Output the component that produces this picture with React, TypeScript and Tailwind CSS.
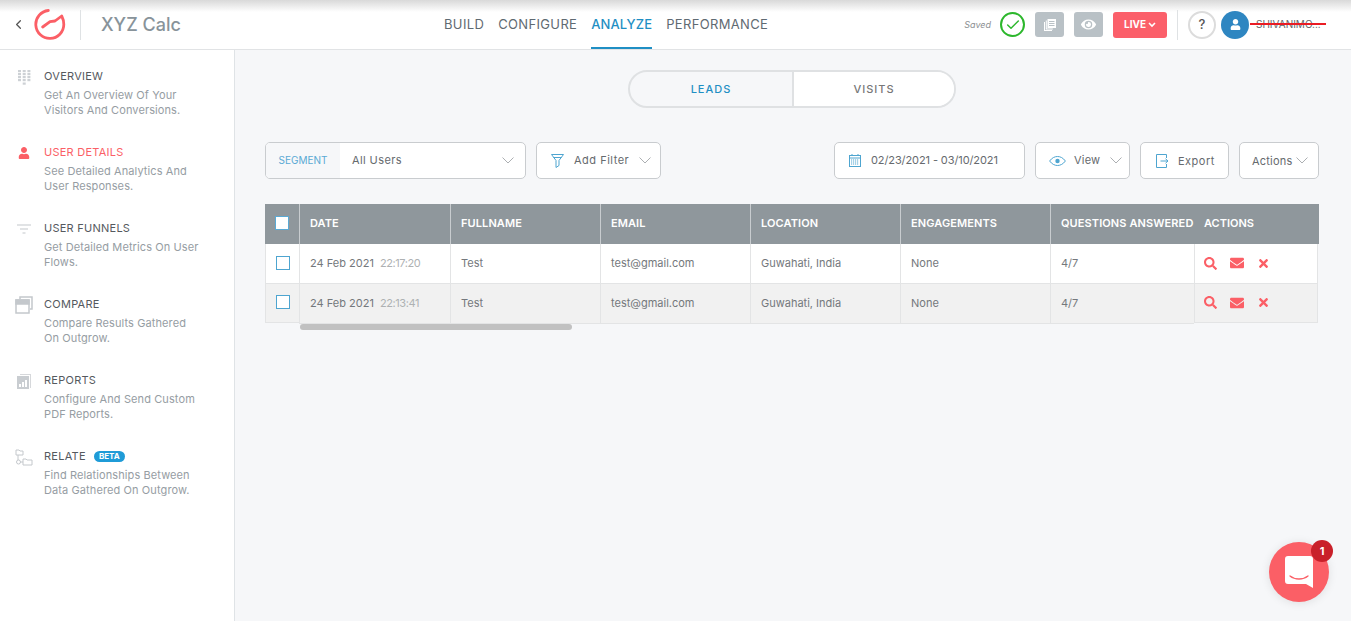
import { ChevronLeft, Check } from "lucide-react";
import { FaEnvelope, FaEye, FaSearch, FaTimes, FaUser } from "react-icons/fa";
import type { ReactNode } from "react";

const font = "font-['Inter','Open_Sans',sans-serif]";

const GridIcon = () => (
  <svg width="13" height="15" viewBox="0 0 13 15" fill="#cdd1d5">
    {[0, 1, 2, 3].map((r) =>
      [0, 1, 2].map((c) => <rect key={`${r}${c}`} x={c * 4.7} y={r * 3} width="3" height="2.2" />)
    )}
    <rect x="4.700" y="12.500" width="3" height="2.200" />
  </svg>
);

const FunnelLines = () => (
  <svg width="14" height="10" viewBox="0 0 14 10" stroke="#c4c8cc" strokeWidth="1.2">
    <path d="M0 1h14M3 5h8M5.500 9h3" />
  </svg>
);

const CompareIcon = () => (
  <svg width="18" height="18" viewBox="0 0 18 18" fill="none" stroke="#c4c8cc" strokeWidth="1.500">
    <path d="M5 3V1h12v12h-2" />
    <rect x="1" y="4" width="13" height="13" fill="#fff" />
    <rect x="1" y="4" width="13" height="4" fill="#c4c8cc" />
  </svg>
);

const ReportIcon = () => (
  <svg width="14" height="15" viewBox="0 0 14 15">
    <path d="M3 0h11v14h-1V1H3z" fill="#d6d8db" />
    <rect x="0" y="2" width="12" height="13" fill="#c9cdd1" />
    <path d="M2 13v-3h2v3zM5 13V8h2v5zM8 13V6h2v7z" fill="#fff" />
  </svg>
);

const RelateIcon = () => (
  <svg width="18" height="17" viewBox="0 0 18 17" fill="none" stroke="#c4c8cc" strokeWidth="1">
    <path d="M1 1h3l1 1h3v4H1zM3 6v5" />
    <circle cx="3.500" cy="13" r="2" fill="#fff" />
    <path d="M8 10h3l1 1h5v5H8z" />
    <path d="M5.500 13H8" />
  </svg>
);

const LogoIcon = () => (
  <svg width="32" height="32" viewBox="0 0 32 32" fill="none" stroke="#fb5f66" strokeWidth="2.800" strokeLinecap="round" strokeLinejoin="round">
    <path d="M14.300 1.500A14 14 0 1 0 29.800 15.500C29.800 12 29 9.500 27.700 7L21 12L16 12.700L8.700 18" />
  </svg>
);

const PagesIcon = () => (
  <svg width="14" height="14" viewBox="0 0 14 14" fill="#fff">
    <path d="M1 4h1v8h7v1H1z" />
    <path d="M2.800 2.500h1v8h6v1h-7z" />
    <path d="M4.500 1H13v9H4.500zM6 3v1h5.500V3zM6 5v1h5.500V5zM6 7v1h5.500V7z" fillRule="evenodd" />
  </svg>
);

const Chevron = ({ className = "" }: { className?: string }) => (
  <svg width="12" height="7" viewBox="0 0 12 7" fill="none" stroke="#a3a6a9" strokeWidth="0.900" className={className}>
    <path d="M.5 .5L6 6l5.500-5.500" />
  </svg>
);

const FilterIcon = () => (
  <svg width="13" height="14" viewBox="0 0 13 14" fill="none" stroke="#4ea5d0" strokeWidth="1">
    <path d="M.5 .5h12M.5 .5L5 6.500v7l3-2v-5L12.500 .5M2.500 3.500h8" />
  </svg>
);

const CalendarIcon = () => (
  <svg width="12" height="13" viewBox="0 0 12 13" fill="none" stroke="#4ea5d0" strokeWidth="1">
    <rect x=".5" y="1.500" width="11" height="11" />
    <path d="M.5 4h11M3 0v2M9 0v2" />
    <path d="M2 6h8M2 8h8M2 10h8" strokeDasharray="1.200 .8" />
  </svg>
);

const EyeIcon = () => (
  <svg width="17" height="10" viewBox="0 0 17 10" fill="none" stroke="#4ea5d0" strokeWidth="1">
    <path d="M.6 5C3 1.800 5.700 .5 8.500 .5S14 1.800 16.400 5C14 8.200 11.300 9.500 8.500 9.500S3 8.200 .6 5z" />
    <circle cx="8.500" cy="5" r="2.200" fill="#4ea5d0" stroke="none" />
  </svg>
);

const ExportIcon = () => (
  <svg width="12" height="14" viewBox="0 0 12 14" fill="none" stroke="#4ea5d0" strokeWidth="1">
    <path d="M10.500 4V.5H.5v13h10V10" />
    <path d="M4.500 7H12M9.500 4.800L12 7 9.500 9.200" />
  </svg>
);

function NavItem({
  icon,
  title,
  lines,
  active,
  badge,
}: {
  icon: ReactNode;
  title: string;
  lines: string[];
  active?: boolean;
  badge?: boolean;
}) {
  return (
    <div className="flex h-[76px]">
      <div className="flex h-[18px] w-[44px] shrink-0 items-center justify-center pl-[4px]">
        <div className="flex w-[18px] justify-center">{icon}</div>
      </div>
      <div>
        <div className={`flex h-[16px] items-center text-[11px] leading-[16px] tracking-[0.25px] ${active ? "text-[#fb5f66]" : "text-[#55595e]"}`}>
          {title}
          {badge && (
            <span className="ml-[8px] flex h-[11px] w-[31px] items-center justify-center rounded-full bg-[#1f9bd7] text-[8px] font-bold tracking-normal text-white">
              BETA
            </span>
          )}
        </div>
        <div className="mt-[4px] text-[11px] leading-[15px] tracking-[0.1px] text-[#969da3]">
          {lines.map((l) => (
            <div key={l}>{l}</div>
          ))}
        </div>
      </div>
    </div>
  );
}

const columns = ["DATE", "FULLNAME", "EMAIL", "LOCATION", "ENGAGEMENTS", "QUESTIONS ANSWERED"];

const rows = [
  { time: "22:17:20", bg: "bg-white" },
  { time: "22:13:41", bg: "bg-[#f1f1f1]" },
];

function Box({ className, children }: { className: string; children: ReactNode }) {
  return <div className={`flex h-[37px] items-center rounded-[5px] border border-[#c9cccf] bg-white ${className}`}>{children}</div>;
}

function Table() {
  return (
    <div className="mt-[25px] flex w-[1054px] text-[11px]">
      {/* pinned checkbox column */}
      <div className="w-[34px] shrink-0">
        <div className="flex h-[40px] items-center justify-center bg-[#8f979c] pb-[3px]">
          <div className="h-[14px] w-[14px] border border-[#5aa9d4] bg-white" />
        </div>
        {rows.map((r, i) => (
          <div
            key={r.time}
            className={`flex items-center justify-center border-l border-b border-[#e3e4e5] ${r.bg} ${i === 1 ? "h-[39px] pb-[2px]" : "h-[40px] pb-[1px]"}`}
          >
            <div className="h-[14px] w-[14px] border border-[#4ea5d0] bg-white" />
          </div>
        ))}
      </div>

      {/* scrolling columns */}
      <div className="w-[895px] shrink-0">
        <div className="flex h-[40px] bg-[#8f979c]">
          {columns.map((c, i) => (
            <div
              key={c}
              className={`flex h-full shrink-0 items-center overflow-hidden border-l border-[#c8cccf] pb-[2px] pl-[10px] font-semibold tracking-[0.1px] whitespace-nowrap text-white ${i === 5 ? "w-[144px]" : i === 0 ? "w-[151px]" : "w-[150px]"}`}
            >
              {c}
            </div>
          ))}
        </div>
        {rows.map((r, ri) => (
          <div key={r.time} className={`flex h-[40px] border-b border-[#e3e4e5] text-[#74787c] ${r.bg}`}>
            {[
              <>
                24 Feb 2021<span className="ml-[6px] tracking-[-0.4px] text-[#aeb1b3]">{r.time}</span>
              </>,
              "Test",
              "test@gmail.com",
              "Guwahati, India",
              "None",
              "4/7",
            ].map((v, i) => (
              <div
                key={i}
                className={`flex shrink-0 items-center border-l border-[#e3e4e5] pl-[10px] whitespace-nowrap ${i === 5 ? "w-[144px]" : i === 0 ? "w-[151px]" : "w-[150px]"} ${ri === 0 ? "pb-[1px]" : ""}`}
              >
                {v}
              </div>
            ))}
          </div>
        ))}
        <div className="ml-[1px] h-[6px] w-[272px] rounded-full bg-[#c1c1c1]" />
      </div>

      {/* pinned actions column */}
      <div className="w-[125px] shrink-0">
        <div className="flex h-[40px] items-center bg-[#8f979c] pb-[2px] pl-[10px] font-semibold text-white">ACTIONS</div>
        {rows.map((r, i) => (
          <div
            key={r.time}
            className={`mr-[1px] flex items-center border-l border-b border-r border-[#e3e4e5] pb-[1px] pl-[9px] ${i === 0 ? "h-[40px]" : "h-[39px]"} ${r.bg}`}
          >
            <FaSearch size={13} color="#fb5f66" />
            <FaEnvelope size={14} color="#fb5f66" className="ml-[13px]" />
            <FaTimes size={13} color="#fb5f66" className="ml-[13px]" />
          </div>
        ))}
      </div>
    </div>
  );
}

export default function App() {
  return (
    <div className={`flex h-[621px] w-[1351px] flex-col overflow-hidden bg-[#f6f7f9] ${font}`}>
      {/* top bar */}
      <header className="relative flex h-[50px] shrink-0 items-center border-b border-[#e1e3e5] bg-white">
        <div className="absolute inset-x-0 top-0 h-[12px] bg-gradient-to-b from-[#d9d9d9] to-white" />
        <div className="relative flex w-[430px] items-center pl-[11px]">
          <ChevronLeft size={15} strokeWidth={2} color="#555" />
          <div className="ml-[8px] flex"><LogoIcon /></div>
          <div className="ml-[14px] h-[30px] w-px bg-[#dfe2e4]" />
          <span className="ml-[20px] text-[18px] font-medium text-[#88939a]">XYZ Calc</span>
        </div>
        <nav className="relative flex h-full items-center gap-[14px] pl-[14px] text-[13px] tracking-[0.35px] text-[#5f6a72]">
          <span>BUILD</span>
          <span>CONFIGURE</span>
          <span className="flex h-full items-center border-b-2 border-[#1f8fc4] pt-[2px] font-medium tracking-[0.1px] text-[#1f8fc4]">ANALYZE</span>
          <span>PERFORMANCE</span>
        </nav>
        <div className="relative ml-auto flex items-center pr-[23px]">
          <span className="mr-[9px] text-[9px] text-[#8c8f92] italic">Saved</span>
          <div className="flex h-[25px] w-[25px] items-center justify-center rounded-full border-2 border-[#2cb72c]">
            <Check size={16} strokeWidth={2.200} color="#2cb72c" />
          </div>
          <div className="ml-[10px] flex h-[25px] w-[29px] items-center justify-center rounded-[3px] bg-[#b9c1c6]">
            <PagesIcon />
          </div>
          <div className="ml-[10px] flex h-[25px] w-[29px] items-center justify-center rounded-[3px] bg-[#b9c1c6]">
            <FaEye size={15} color="#fff" />
          </div>
          <div className="ml-[10px] flex h-[26px] w-[54px] items-center justify-center rounded-[3px] bg-[#fb5f6a] text-[10px] font-bold text-white">
            LIVE
            <svg width="8" height="6" viewBox="0 0 8 6" fill="none" stroke="#fff" strokeWidth="1.600" className="ml-[2px]">
              <path d="M1 1l3 3 3-3" />
            </svg>
          </div>
          <div className="ml-[10px] h-[30px] w-px bg-[#dfe2e4]" />
          <div className="ml-[10px] flex h-[28px] w-[28px] items-center justify-center rounded-full border-2 border-[#dcdcdc] text-[13px] font-medium text-[#555]">?</div>
          <div className="ml-[5px] flex h-[28px] w-[28px] items-center justify-center rounded-full bg-[#2e86c1]">
            <FaUser size={11} color="#fff" />
          </div>
          <div className="relative ml-[7px] w-[72px] text-[10px] whitespace-nowrap text-[#666]">
            SHIVANIMO...
            <div className="absolute top-[6px] -left-[6px] h-[2px] w-[76px] bg-[#ea1c24]" />
          </div>
        </div>
      </header>

      <div className="flex min-h-0 flex-1">
        {/* sidebar */}
        <aside className="w-[235px] shrink-0 border-r border-[#dfe3e6] bg-white pt-[18px]">
          <NavItem icon={<GridIcon />} title="OVERVIEW" lines={["Get An Overview Of Your", "Visitors And Conversions."]} />
          <NavItem active icon={<FaUser size={12} color="#fb5f66" />} title="USER DETAILS" lines={["See Detailed Analytics And", "User Responses."]} />
          <NavItem icon={<FunnelLines />} title="USER FUNNELS" lines={["Get Detailed Metrics On User", "Flows."]} />
          <NavItem icon={<CompareIcon />} title="COMPARE" lines={["Compare Results Gathered", "On Outgrow."]} />
          <NavItem icon={<ReportIcon />} title="REPORTS" lines={["Configure And Send Custom", "PDF Reports."]} />
          <NavItem badge icon={<RelateIcon />} title="RELATE" lines={["Find Relationships Between", "Data Gathered On Outgrow."]} />
        </aside>

        {/* main */}
        <main className="relative flex-1 pl-[30px]">
          <div className="mt-[20px] ml-[363px] flex h-[38px] w-[328px] overflow-hidden rounded-full border-2 border-[#dfe1e3] text-[11px] tracking-[1px]">
            <div className="flex w-[164px] items-center justify-center border-r-2 border-[#dfe1e3] font-medium text-[#1f8fc4]">LEADS</div>
            <div className="flex flex-1 items-center justify-center bg-white font-medium text-[#777]">VISITS</div>
          </div>

          <div className="mt-[34px] flex w-[1054px] items-center text-[11px] text-[#666a6e]">
            <Box className="w-[261px] overflow-hidden">
              <div className="flex h-full w-[74px] items-center justify-center bg-[#f6f7f9] text-[10px] text-[#5aa9d4]">SEGMENT</div>
              <span className="ml-[12px] tracking-[0.4px]">All Users</span>
              <Chevron className="mr-[11px] ml-auto" />
            </Box>
            <Box className="ml-[10px] w-[125px] pl-[14px]">
              <FilterIcon />
              <span className="ml-[10px] tracking-[0.5px]">Add Filter</span>
              <Chevron className="mr-[9px] ml-auto" />
            </Box>
            <Box className="ml-auto w-[191px] pl-[14px]">
              <CalendarIcon />
              <span className="ml-[10px] tracking-[-0.1px] whitespace-nowrap">02/23/2021 - 03/10/2021</span>
            </Box>
            <Box className="ml-[10px] w-[95px] pl-[13px]">
              <EyeIcon />
              <span className="ml-[8px] tracking-[0.2px]">View</span>
              <Chevron className="mr-[7px] ml-auto" />
            </Box>
            <Box className="ml-[10px] w-[89px] pl-[15px]">
              <ExportIcon />
              <span className="ml-[10px] pt-[2px] tracking-[0.5px]">Export</span>
            </Box>
            <Box className="ml-[10px] w-[80px] pl-[12px]">
              <span className="pt-[2px] tracking-[0.2px]">Actions</span>
              <Chevron className="ml-[4px]" />
            </Box>
          </div>

          <Table />

          {/* chat launcher */}
          <div className="absolute right-[22px] bottom-[19px] flex h-[60px] w-[60px] items-center justify-center rounded-full bg-[#fb5f66] shadow-[0_1px_10px_rgba(0,0,0,0.1)]">
            <svg width="28" height="32" viewBox="0 0 28 32">
              <path d="M3 0h22a3 3 0 0 1 3 3v29l-7-4H3a3 3 0 0 1-3-3V3a3 3 0 0 1 3-3z" fill="#fff" />
              <path d="M5 20c5 4 13 4 18 0" fill="none" stroke="#fb5f66" strokeWidth="1.300" strokeLinecap="round" />
            </svg>
            <div className="absolute -top-[2px] -right-[4px] flex h-[22px] w-[22px] items-center justify-center rounded-full bg-[#c9202a] text-[11px] font-bold text-white">1</div>
          </div>
        </main>
      </div>
    </div>
  );
}
